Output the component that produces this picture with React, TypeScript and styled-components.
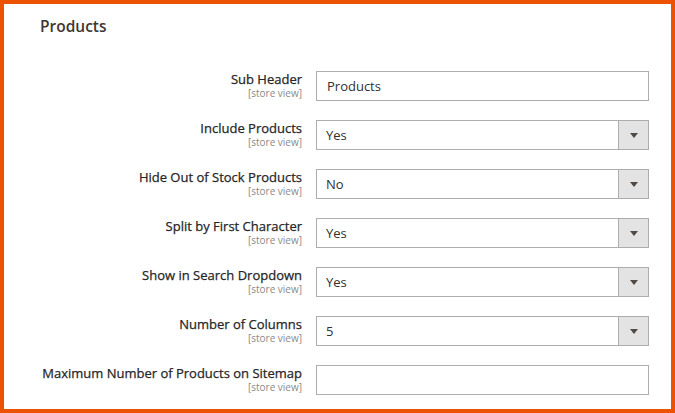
import styled, { createGlobalStyle } from "styled-components"

const GlobalStyle = createGlobalStyle`
  html, body {
    margin: 0;
    padding: 0;
    background: #fff;
  }
  body {
    font-family: "Open Sans", "Liberation Sans", sans-serif;
    color: #303030;
  }
  * {
    box-sizing: border-box;
  }
`

interface Field {
  label: string,
  kind: 'text' | 'select',
  value: string,
  options?: string[]
}

const fields: Field[] = [
  { label: 'Sub Header', kind: 'text', value: 'Products' },
  { label: 'Include Products', kind: 'select', value: 'Yes', options: ['Yes', 'No'] },
  { label: 'Hide Out of Stock Products', kind: 'select', value: 'No', options: ['Yes', 'No'] },
  { label: 'Split by First Character', kind: 'select', value: 'Yes', options: ['Yes', 'No'] },
  { label: 'Show in Search Dropdown', kind: 'select', value: 'Yes', options: ['Yes', 'No'] },
  { label: 'Number of Columns', kind: 'select', value: '5', options: ['1', '2', '3', '4', '5'] },
  { label: 'Maximum Number of Products on Sitemap', kind: 'text', value: '' },
]

export default function App() {
  return (
    <>
      <GlobalStyle />
      <Frame>
        <Title>Products</Title>
        <Fields>
          {fields.map(field => (
            <Row key={field.label}>
              <LabelCol>
                <Label>{field.label}</Label>
                <Scope>[store view]</Scope>
              </LabelCol>
              {field.kind === 'text' ? (
                <TextInput type="text" defaultValue={field.value} />
              ) : (
                <SelectWrap>
                  <Select defaultValue={field.value}>
                    {field.options?.map(opt => (
                      <option key={opt} value={opt}>{opt}</option>
                    ))}
                  </Select>
                  <ArrowBox>
                    <Arrow />
                  </ArrowBox>
                </SelectWrap>
              )}
            </Row>
          ))}
        </Fields>
      </Frame>
    </>
  )
}

const Frame = styled.div`
  width: 675px;
  height: 413px;
  border: 4px solid #eb5202;
  background: #fff;
  padding: 12px 22px 0 0;
  overflow: hidden;
`
const Title = styled.h2`
  margin: 0 0 35px 36px;
  font-size: 15.5px;
  line-height: 20px;
  font-weight: 600;
  color: #41362f;
`
const Fields = styled.div`
  display: flex;
  flex-direction: column;
  gap: 19px;
`
const Row = styled.div`
  display: grid;
  grid-template-columns: 298px 333px;
  column-gap: 14px;
  align-items: start;
`
const LabelCol = styled.div`
  display: flex;
  flex-direction: column;
  align-items: flex-end;
  text-align: right;
`
const Label = styled.label`
  font-size: 13px;
  line-height: 17px;
  font-weight: 400;
  color: #262626;
  -webkit-text-stroke: 0.25px #262626;
`
const Scope = styled.span`
  font-size: 10px;
  line-height: 11px;
  color: #8a8a8a;
`
const TextInput = styled.input`
  width: 333px;
  height: 30px;
  border: 1px solid #adadad;
  border-radius: 0;
  padding: 0 10px;
  font-family: inherit;
  font-size: 13px;
  color: #303030;
  background: #fff;
  outline: none;
`
const SelectWrap = styled.div`
  position: relative;
  width: 333px;
  height: 30px;
`
const Select = styled.select`
  appearance: none;
  width: 100%;
  height: 100%;
  border: 1px solid #adadad;
  border-radius: 0;
  padding: 0 40px 0 9px;
  font-family: inherit;
  font-size: 13px;
  color: #303030;
  background: #fff;
  outline: none;
`
const ArrowBox = styled.span`
  position: absolute;
  top: 0;
  right: 0;
  width: 31px;
  height: 30px;
  display: flex;
  align-items: center;
  justify-content: center;
  background: #e3e3e3;
  border: 1px solid #adadad;
  pointer-events: none;
`
const Arrow = styled.span`
  width: 0;
  height: 0;
  border-left: 4px solid transparent;
  border-right: 4px solid transparent;
  border-top: 5px solid #514943;
`
